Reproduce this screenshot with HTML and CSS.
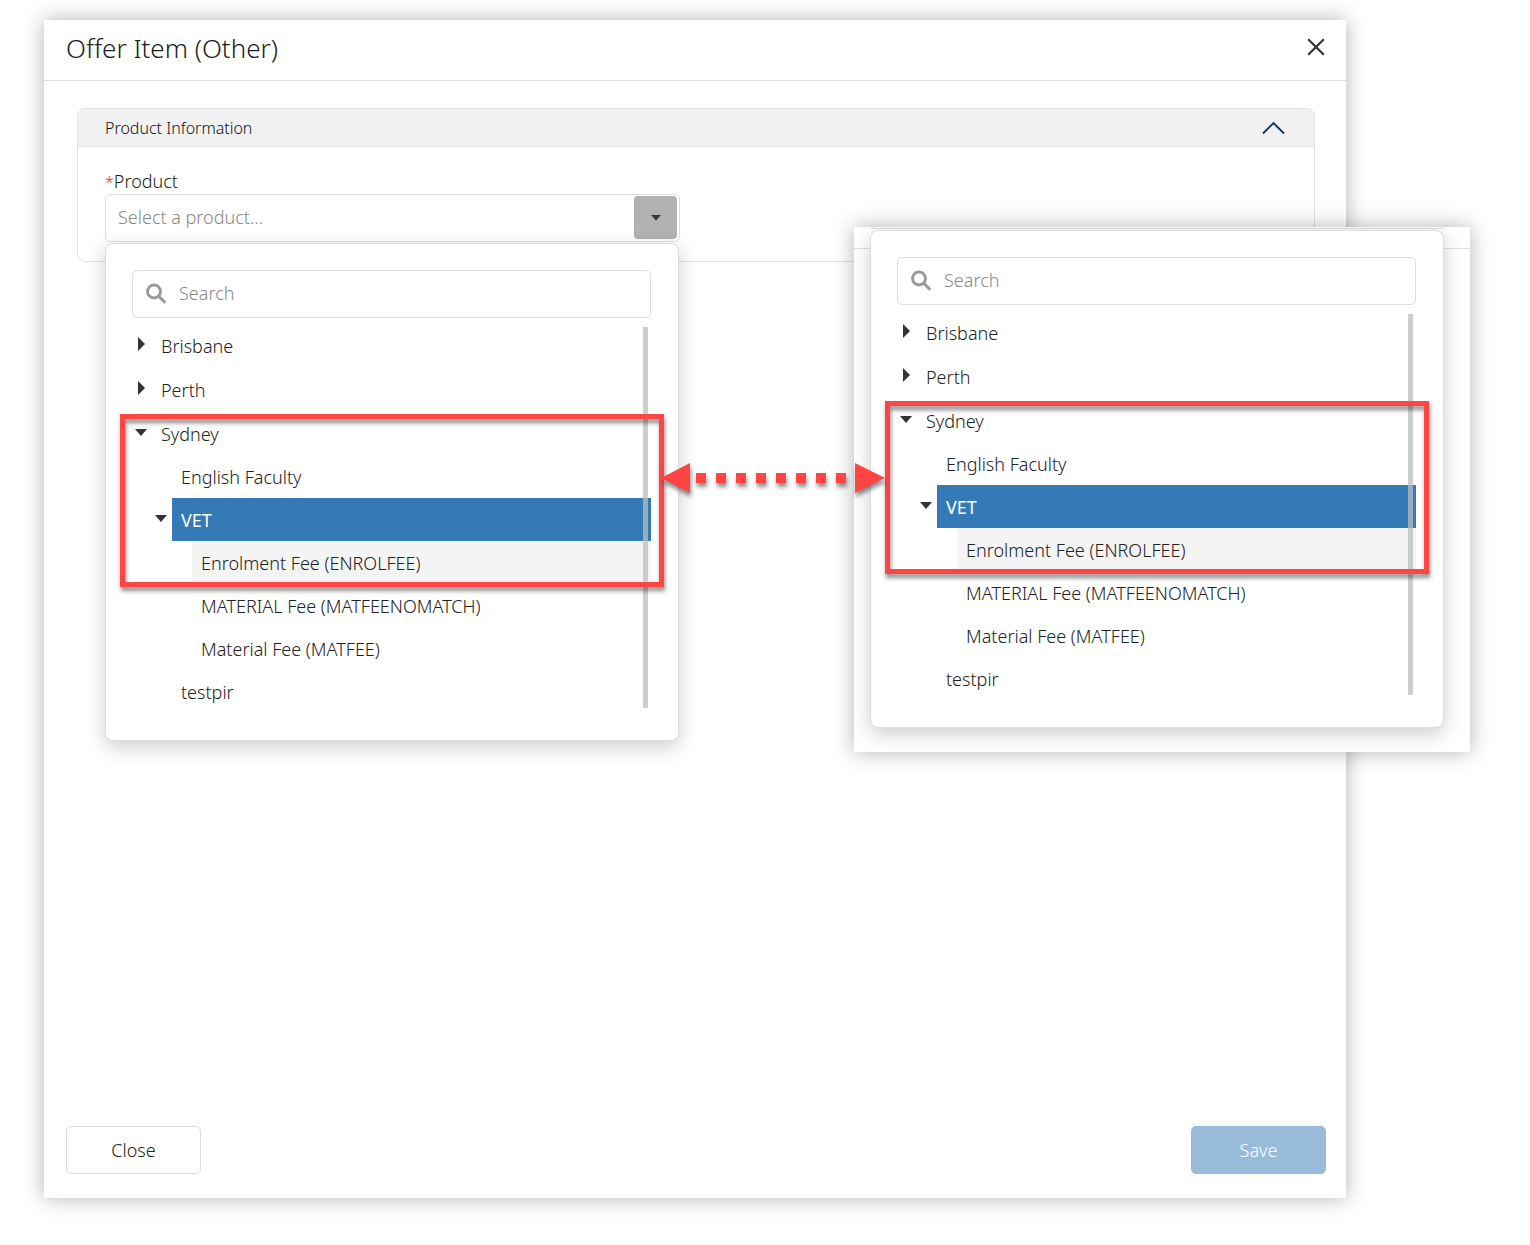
FILE: index.html
```html
<!DOCTYPE html>
<html lang="en">
<head>
<meta charset="utf-8">
<title>Offer Item (Other)</title>
<link rel="stylesheet" href="styles.css">
</head>
<body>
<main class="page">
  <section class="dialog" role="dialog" aria-labelledby="dialog-title">
    <header class="dialog-header">
      <h1 class="dialog-title" id="dialog-title">Offer Item (Other)</h1>
      <button class="icon-button" type="button" aria-label="Close dialog">
        <svg width="18" height="18" viewBox="0 0 18 18"><path d="M1.2 1.2 16.8 16.8M16.8 1.2 1.2 16.8" fill="none" stroke="#333" stroke-width="2.2"/></svg>
      </button>
    </header>
    <div class="dialog-body">
      <section class="card">
        <header class="card-header">
          <h2 class="card-title">Product Information</h2>
          <button class="icon-button" type="button" aria-label="Collapse section">
            <svg width="24" height="14" viewBox="0 0 24 14"><path d="M1 12.500 11.500 2 22 12.500" fill="none" stroke="#0b2f6b" stroke-width="1.8"/></svg>
          </button>
        </header>
        <div class="card-body">
          <label class="field-label" for="product"><span class="required">*</span>Product</label>
          <div class="select">
            <input class="select-input" id="product" type="text" placeholder="Select a product...">
            <button class="select-toggle" type="button" aria-label="Show products">
              <svg width="10" height="6" viewBox="0 0 10 6"><path d="M0 0h10L5 5.500z" fill="#333"/></svg>
            </button>
            <div class="panel">
              <div class="search">
                <svg class="search-icon" width="22" height="22" viewBox="0 0 22 22"><circle cx="9" cy="8.500" r="6.500" fill="none" stroke="#999" stroke-width="2.800"/><path d="M13.700 13.200 20.300 19.800" stroke="#999" stroke-width="3"/></svg>
                <input class="search-input" type="search" placeholder="Search" aria-label="Search products">
              </div>
              <div class="tree-area">
                <ul class="tree">
                  <li class="node"><div class="row"><button class="twisty closed" type="button" aria-label="Expand Brisbane"></button><span class="label">Brisbane</span></div></li>
                  <li class="node"><div class="row"><button class="twisty closed" type="button" aria-label="Expand Perth"></button><span class="label">Perth</span></div></li>
                  <li class="node"><div class="row"><button class="twisty open" type="button" aria-label="Collapse Sydney"></button><span class="label">Sydney</span></div>
                    <ul class="branch">
                      <li><div class="row leaf"><span class="label">English Faculty</span></div></li>
                      <li><div class="row"><button class="twisty open" type="button" aria-label="Collapse VET"></button><span class="label selected">VET</span></div>
                        <ul class="branch">
                          <li><div class="row leaf"><span class="label hovered">Enrolment Fee (ENROLFEE)</span></div></li>
                          <li><div class="row leaf"><span class="label">MATERIAL Fee (MATFEENOMATCH)</span></div></li>
                          <li><div class="row leaf"><span class="label">Material Fee (MATFEE)</span></div></li>
                        </ul>
                      </li>
                      <li><div class="row leaf"><span class="label">testpir</span></div></li>
                    </ul>
                  </li>
                </ul>
                <div class="scroll-thumb"></div>
              </div>
              <div class="highlight"></div>
            </div>
          </div>
        </div>
      </section>
    </div>
    <footer class="dialog-footer">
      <button class="action" type="button">Close</button>
      <button class="action primary" type="button">Save</button>
    </footer>
  </section>

  <aside class="callout">
    <div class="callout-edge"><div class="select-edge"></div></div>
    <div class="panel">
      <div class="search">
        <svg class="search-icon" width="22" height="22" viewBox="0 0 22 22"><circle cx="9" cy="8.500" r="6.500" fill="none" stroke="#999" stroke-width="2.800"/><path d="M13.700 13.200 20.300 19.800" stroke="#999" stroke-width="3"/></svg>
        <input class="search-input" type="search" placeholder="Search" aria-label="Search products">
      </div>
      <div class="tree-area">
        <ul class="tree">
          <li class="node"><div class="row"><button class="twisty closed" type="button" aria-label="Expand Brisbane"></button><span class="label">Brisbane</span></div></li>
          <li class="node"><div class="row"><button class="twisty closed" type="button" aria-label="Expand Perth"></button><span class="label">Perth</span></div></li>
          <li class="node"><div class="row"><button class="twisty open" type="button" aria-label="Collapse Sydney"></button><span class="label">Sydney</span></div>
            <ul class="branch">
              <li><div class="row leaf"><span class="label">English Faculty</span></div></li>
              <li><div class="row"><button class="twisty open" type="button" aria-label="Collapse VET"></button><span class="label selected">VET</span></div>
                <ul class="branch">
                  <li><div class="row leaf"><span class="label hovered">Enrolment Fee (ENROLFEE)</span></div></li>
                  <li><div class="row leaf"><span class="label">MATERIAL Fee (MATFEENOMATCH)</span></div></li>
                  <li><div class="row leaf"><span class="label">Material Fee (MATFEE)</span></div></li>
                </ul>
              </li>
              <li><div class="row leaf"><span class="label">testpir</span></div></li>
            </ul>
          </li>
        </ul>
        <div class="scroll-thumb"></div>
      </div>
      <div class="highlight"></div>
    </div>
  </aside>

  <svg class="arrow" width="226" height="40" viewBox="0 0 226 40" aria-hidden="true">
    <path d="M1 18 30 3v30zM225 18 195 3v30z" fill="#ff4444"/>
    <path d="M36 18H186" stroke="#ff4444" stroke-width="10" stroke-dasharray="10 10"/>
  </svg>
</main>
</body>
</html>
```
FILE: styles.css
```css
* { box-sizing: border-box; }

body {
  margin: 0;
  background: #fff;
  color: #222;
  font-family: "Noto Sans", "Open Sans", sans-serif;
  font-size: 18px;
  font-weight: 300;
  line-height: 24px;
}

button, input { font: inherit; color: inherit; }
h1, h2, ul { margin: 0; padding: 0; font-weight: inherit; }
ul { list-style: none; }

.page {
  position: relative;
  min-height: 100vh;
  padding: 20px 184px 47px 44px;
  display: flex;
}

.dialog {
  flex: 1;
  display: flex;
  flex-direction: column;
  background: #fff;
  box-shadow: 0 0 20px rgba(0, 0, 0, 0.3);
}

.dialog-header {
  display: flex;
  justify-content: space-between;
  align-items: center;
  height: 61px;
  padding: 0 21px 7px 22px;
  border-bottom: 1px solid #ddd;
}
.dialog-title { padding-top: 2px; font-size: 26px; line-height: 32px; }

.icon-button {
  display: flex;
  padding: 0;
  border: 0;
  background: none;
}

.dialog-body { flex: 1; padding: 27px 31px 0 33px; }

.card {
  border: 1px solid #dfe1e8;
  border-radius: 8px;
}
.card-header {
  display: flex;
  justify-content: space-between;
  align-items: center;
  height: 38px;
  padding: 0 28px 0 27px;
  background: #f1f1f1;
  border-bottom: 1px solid #dfe1e8;
  border-radius: 8px 8px 0 0;
}
.card-title { font-size: 16px; color: #111; }
.card-body { padding: 22px 27px 19px; }

.field-label { display: block; height: 25px; }
.required { color: #f22; font-size: 16px; }

.select {
  position: relative;
  display: flex;
  width: 575px;
  height: 48px;
  padding: 1px;
  border: 1px solid #ddd;
  border-radius: 5px;
}
.select-input {
  flex: 1;
  min-width: 0;
  padding: 0 11px 2px;
  border: 0;
  background: none;
}
::placeholder { color: #888; opacity: 1; }
.select-toggle {
  display: flex;
  justify-content: center;
  align-items: center;
  width: 43px;
  height: 43px;
  margin-right: 1px;
  padding: 0;
  border: 0;
  border-radius: 4px;
  background: #b2b2b2;
}

.panel {
  position: absolute;
  z-index: 1;
  top: 48px;
  left: -1px;
  width: 574px;
  padding: 26px 27px 27px 26px;
  border: 1px solid #ddd;
  border-radius: 8px;
  background: #fff;
  box-shadow: 0 6px 20px rgba(0, 0, 0, 0.2);
}
.search {
  display: flex;
  align-items: center;
  height: 48px;
  padding: 0 12px;
  gap: 12px;
  border: 1px solid #ddd;
  border-radius: 5px;
}
.search-input {
  flex: 1;
  min-width: 0;
  padding: 0 0 2px;
  border: 0;
  background: none;
  appearance: none;
}

.tree-area { position: relative; padding-top: 6px; }
.node + .node { margin-top: 1px; }
.branch { padding-left: 20px; }
.row { display: flex; height: 43px; }
.leaf { padding-left: 20px; }
.label {
  flex: 1;
  padding: 10px 9px 9px;
}
.selected { background: #337ab7; color: #fff; font-weight: 400; }
.hovered { background: #f4f4f4; }

.twisty {
  display: flex;
  justify-content: center;
  align-items: center;
  width: 20px;
  padding: 0 2px 3px 0;
  border: 0;
  background: none;
}
.twisty::before { content: ""; border: 6px solid transparent; }
.closed::before { border-width: 7px 0 7px 7px; border-left-color: #333; }
.open::before { border-width: 7px 6px 0; border-top-color: #333; }

.scroll-thumb {
  position: absolute;
  top: 9px;
  right: 3px;
  bottom: 5px;
  width: 5px;
  background: rgba(190, 190, 190, 0.75);
}

.highlight {
  position: absolute;
  top: 170px;
  left: 14px;
  width: 544px;
  height: 173px;
  border: 5px solid #ff4444;
  filter: drop-shadow(1px 4px 2px rgba(0, 0, 0, 0.45));
}

.dialog-footer {
  display: flex;
  justify-content: space-between;
  padding: 24px 20px 24px 22px;
}
.action {
  width: 135px;
  height: 48px;
  padding: 0;
  border: 1px solid #ddd;
  border-radius: 5px;
  background: #fff;
}
.primary {
  border-color: #99bbda;
  background: #99bbda;
  color: #fff;
}

.callout {
  position: absolute;
  z-index: 2;
  top: 227px;
  left: 854px;
  width: 616px;
  height: 525px;
  overflow: hidden;
  background: #fff;
  box-shadow: 0 0 20px rgba(0, 0, 0, 0.3);
}
.callout-edge { height: 22px; border-bottom: 1px solid #dfe1e8; }
.select-edge {
  width: 574px;
  height: 2px;
  margin-left: 16px;
  border-bottom: 1px solid #ddd;
  border-radius: 0 0 5px 5px;
}
.callout .panel { top: 3px; left: 16px; }

.arrow {
  position: absolute;
  z-index: 3;
  top: 460px;
  left: 660px;
  filter: drop-shadow(1px 4px 2px rgba(0, 0, 0, 0.45));
}
```
